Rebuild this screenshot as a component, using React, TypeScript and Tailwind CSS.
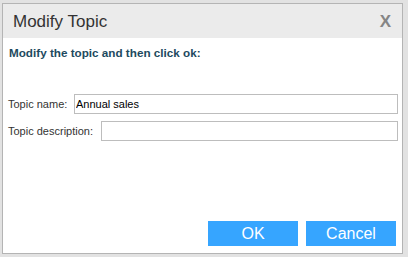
import React, { useState } from 'react';

const App: React.FC = () => {
  const [name, setName] = useState<string>('Annual sales');
  const [description, setDescription] = useState<string>('');

  return (
    <div className="w-[408px] h-[257px] bg-[#e2e2e2] pt-[3px] pl-[2px] overflow-hidden font-['Liberation_Sans',Arial,sans-serif]">
      <div className="w-[401px] h-[251px] border border-[#b4b4b4] bg-white flex flex-col">
        <header className="h-[34px] bg-[#ebebeb] flex items-center justify-between pl-[10px] pr-[11px]">
          <h1 className="text-[17px] leading-none text-[#333333]">Modify Topic</h1>
          <button className="text-[17px] font-bold leading-none text-[#858585] mt-[1px]">X</button>
        </header>

        <main className="flex-1 flex flex-col pl-[5px] pr-[4px]">
          <p className="mt-[8px] pl-[1px] text-[11.7px] leading-[14px] font-bold text-[#1e4a60]">
            Modify the topic and then click ok:
          </p>

          <div className="mt-[34px] flex flex-col gap-[7px]">
            <div className="flex items-center justify-between">
              <label className="text-[11px] text-[#333333]">Topic name:</label>
              <input
                type="text"
                value={name}
                onChange={(e) => setName(e.target.value)}
                className="w-[324px] h-[20px] border border-[#bdbdbd] px-[1px] text-[11px] text-black outline-none"
              />
            </div>
            <div className="flex items-center justify-between">
              <label className="text-[11px] text-[#333333]">Topic description:</label>
              <input
                type="text"
                value={description}
                onChange={(e) => setDescription(e.target.value)}
                className="w-[297px] h-[20px] border border-[#bdbdbd] px-[1px] text-[11px] text-black outline-none"
              />
            </div>
          </div>

          <div className="mt-auto mb-[7px] flex justify-end gap-[8px] pr-[2px]">
            <button className="w-[90px] h-[25px] bg-[#36a5ff] text-white text-[16px] leading-none">OK</button>
            <button className="w-[90px] h-[25px] bg-[#36a5ff] text-white text-[16px] leading-none">Cancel</button>
          </div>
        </main>
      </div>
    </div>
  );
};

export default App;
